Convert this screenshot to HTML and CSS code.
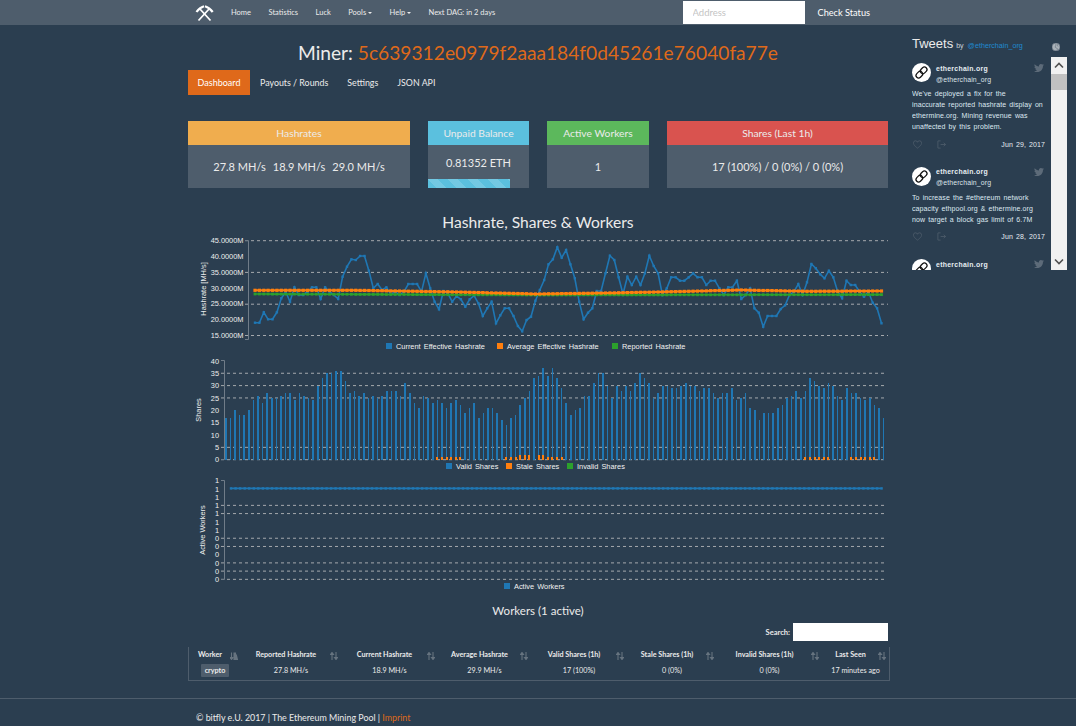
FILE: index.html
```html
<!DOCTYPE html>
<html lang="en">
<head>
<meta charset="utf-8">
<title>Miner Dashboard</title>
<link rel="stylesheet" href="styles.css">
</head>
<body>
<header class="topbar">
  <a class="logo" href="#" aria-label="Ethermine">
    <svg viewBox="0 0 20 18" width="20" height="18"><path class="logo-handle" d="M3.5 16.5 L14.5 4.5 M15.5 16.5 L4.5 4.5"/><path class="logo-head" d="M1.5 8 Q4.5 3.5 9 2.2 M17.7 8 Q14.5 3.5 10 2.2"/></svg>
  </a>
  <nav class="topnav">
    <a href="#">Home</a>
    <a href="#">Statistics</a>
    <a href="#">Luck</a>
    <a href="#">Pools <i class="caret"></i></a>
    <a href="#">Help <i class="caret"></i></a>
    <a href="#">Next DAG: in 2 days</a>
  </nav>
  <form class="search">
    <input class="address" type="text" placeholder="Address">
    <a class="check" href="#">Check Status</a>
  </form>
</header>

<div class="layout">
  <main class="content">
    <h1 class="miner">Miner: <span class="hash">5c639312e0979f2aaa184f0d45261e76040fa77e</span></h1>
    <ul class="tabs">
      <li class="tab active">Dashboard</li>
      <li class="tab">Payouts / Rounds</li>
      <li class="tab">Settings</li>
      <li class="tab">JSON API</li>
    </ul>
    <div class="cards">
      <section class="card"><h2 class="card-head warning">Hashrates</h2><div class="card-body wide-gap"><span>27.8 MH/s</span><span>18.9 MH/s</span><span>29.0 MH/s</span></div></section>
      <section class="card"><h2 class="card-head info">Unpaid Balance</h2><div class="card-body short">0.81352 ETH</div><div class="progress"><div class="progress-bar"></div></div></section>
      <section class="card"><h2 class="card-head success">Active Workers</h2><div class="card-body">1</div></section>
      <section class="card"><h2 class="card-head danger">Shares (Last 1h)</h2><div class="card-body">17 (100%) / 0 (0%) / 0 (0%)</div></section>
    </div>
    <h2 class="charts-title">Hashrate, Shares &amp; Workers</h2>
    <div id="chart-hash" class="chart chart-a"></div>
    <div id="chart-shares" class="chart chart-b"></div>
    <div id="chart-workers" class="chart chart-b"></div>
    <h2 class="workers-title">Workers (1 active)</h2>
    <div class="table-search"><label class="search-label" for="worker-search">Search:</label><input id="worker-search" class="search-box" type="text"></div>
    <table class="workers">
      <thead>
        <tr>
          <th class="c1">Worker<svg class="sort" viewBox="0 0 8 8"><path d="M1.5 0.5V7M0 5.5L1.5 7.5L3 5.5Z"/><path d="M4 1h1.5v1H4zM4 3h2.5v1H4zM4 5h3v1H4zM4 7h4v1H4z"/></svg></th>
          <th class="c2">Reported Hashrate<svg class="sort" viewBox="0 0 8 8"><path d="M2 1V8M0.5 2.5L2 .5L3.5 2.5ZM6 0V7M4.5 5.5L6 7.5L7.5 5.5Z"/></svg></th>
          <th class="c3">Current Hashrate<svg class="sort" viewBox="0 0 8 8"><path d="M2 1V8M0.5 2.5L2 .5L3.5 2.5ZM6 0V7M4.5 5.5L6 7.5L7.5 5.5Z"/></svg></th>
          <th class="c4">Average Hashrate<svg class="sort" viewBox="0 0 8 8"><path d="M2 1V8M0.5 2.5L2 .5L3.5 2.5ZM6 0V7M4.5 5.5L6 7.5L7.5 5.5Z"/></svg></th>
          <th class="c5">Valid Shares (1h)<svg class="sort" viewBox="0 0 8 8"><path d="M2 1V8M0.5 2.5L2 .5L3.5 2.5ZM6 0V7M4.5 5.5L6 7.5L7.5 5.5Z"/></svg></th>
          <th class="c6">Stale Shares (1h)<svg class="sort" viewBox="0 0 8 8"><path d="M2 1V8M0.5 2.5L2 .5L3.5 2.5ZM6 0V7M4.5 5.5L6 7.5L7.5 5.5Z"/></svg></th>
          <th class="c7">Invalid Shares (1h)<svg class="sort" viewBox="0 0 8 8"><path d="M2 1V8M0.5 2.5L2 .5L3.5 2.5ZM6 0V7M4.5 5.5L6 7.5L7.5 5.5Z"/></svg></th>
          <th class="c8">Last Seen<svg class="sort" viewBox="0 0 8 8"><path d="M2 1V8M0.5 2.5L2 .5L3.5 2.5ZM6 0V7M4.5 5.5L6 7.5L7.5 5.5Z"/></svg></th>
        </tr>
      </thead>
      <tbody>
        <tr>
          <td><span class="tag">crypto</span></td>
          <td>27.8 MH/s</td><td>18.9 MH/s</td><td>29.9 MH/s</td><td>17 (100%)</td><td>0 (0%)</td><td>0 (0%)</td><td>17 minutes ago</td>
        </tr>
      </tbody>
    </table>
  </main>

  <aside class="tweets">
    <div class="tweets-head">
      <span class="tweets-title">Tweets</span><span class="tweets-by">by</span><a class="tweets-handle" href="#">@etherchain_org</a>
      <svg class="globe" viewBox="0 0 8 8"><circle cx="4" cy="4" r="4"/><path d="M3 .5Q5 2 3.5 3T5 5.5T3.5 7.5M6 1Q5 2 6 3.5"/></svg>
    </div>
    <div class="tweets-frame">
      <div class="tweet-list">
        <article class="tweet">
          <div class="tweet-top">
            <span class="avatar"><svg viewBox="0 0 20 20"><g transform="rotate(-45 10 10)"><rect x="3" y="7.3" width="7.6" height="5.4" rx="2.7"/><rect x="9.4" y="7.3" width="7.6" height="5.4" rx="2.7"/></g></svg></span>
            <div class="who"><b class="name">etherchain.org</b><span class="handle">@etherchain_org</span></div>
            <svg class="bird" viewBox="0 0 24 24"><path d="M23.953 4.57a10 10 0 01-2.825.775 4.958 4.958 0 002.163-2.723c-.951.555-2.005.959-3.127 1.184a4.92 4.92 0 00-8.384 4.482C7.69 8.095 4.067 6.13 1.64 3.162a4.822 4.822 0 00-.666 2.475c0 1.71.87 3.213 2.188 4.096a4.904 4.904 0 01-2.228-.616v.06a4.923 4.923 0 003.946 4.827 4.996 4.996 0 01-2.212.085 4.936 4.936 0 004.604 3.417 9.867 9.867 0 01-6.102 2.105c-.39 0-.779-.023-1.17-.067a13.995 13.995 0 007.557 2.209c9.053 0 13.998-7.496 13.998-13.985 0-.21 0-.42-.015-.63A9.935 9.935 0 0024 4.59z"/></svg>
          </div>
          <p class="tweet-text">We've deployed a fix for the<br>inaccurate reported hashrate display on<br>ethermine.org. Mining revenue was<br>unaffected by this problem.</p>
          <div class="tweet-foot">
            <svg class="act heart" viewBox="0 0 10 10"><path d="M5 9C1 6 .5 4.5 .5 3.2A2.3 2.3 0 015 2.5 2.3 2.3 0 019.5 3.2C9.5 4.5 9 6 5 9Z"/></svg>
            <svg class="act share" viewBox="0 0 10 10"><path d="M4 1H1V9H4M4 5H9.5M7.5 3L9.5 5L7.5 7"/></svg>
            <time class="date">Jun 29, 2017</time>
          </div>
        </article>
        <article class="tweet">
          <div class="tweet-top">
            <span class="avatar"><svg viewBox="0 0 20 20"><g transform="rotate(-45 10 10)"><rect x="3" y="7.3" width="7.6" height="5.4" rx="2.7"/><rect x="9.4" y="7.3" width="7.6" height="5.4" rx="2.7"/></g></svg></span>
            <div class="who"><b class="name">etherchain.org</b><span class="handle">@etherchain_org</span></div>
            <svg class="bird" viewBox="0 0 24 24"><path d="M23.953 4.57a10 10 0 01-2.825.775 4.958 4.958 0 002.163-2.723c-.951.555-2.005.959-3.127 1.184a4.92 4.92 0 00-8.384 4.482C7.69 8.095 4.067 6.13 1.64 3.162a4.822 4.822 0 00-.666 2.475c0 1.71.87 3.213 2.188 4.096a4.904 4.904 0 01-2.228-.616v.06a4.923 4.923 0 003.946 4.827 4.996 4.996 0 01-2.212.085 4.936 4.936 0 004.604 3.417 9.867 9.867 0 01-6.102 2.105c-.39 0-.779-.023-1.17-.067a13.995 13.995 0 007.557 2.209c9.053 0 13.998-7.496 13.998-13.985 0-.21 0-.42-.015-.63A9.935 9.935 0 0024 4.59z"/></svg>
          </div>
          <p class="tweet-text">To increase the #ethereum network<br>capacity ethpool.org &amp; ethermine.org<br>now target a block gas limit of 6.7M</p>
          <div class="tweet-foot">
            <svg class="act heart" viewBox="0 0 10 10"><path d="M5 9C1 6 .5 4.5 .5 3.2A2.3 2.3 0 015 2.5 2.3 2.3 0 019.5 3.2C9.5 4.5 9 6 5 9Z"/></svg>
            <svg class="act share" viewBox="0 0 10 10"><path d="M4 1H1V9H4M4 5H9.5M7.5 3L9.5 5L7.5 7"/></svg>
            <time class="date">Jun 28, 2017</time>
          </div>
        </article>
        <article class="tweet">
          <div class="tweet-top">
            <span class="avatar"><svg viewBox="0 0 20 20"><g transform="rotate(-45 10 10)"><rect x="3" y="7.3" width="7.6" height="5.4" rx="2.7"/><rect x="9.4" y="7.3" width="7.6" height="5.4" rx="2.7"/></g></svg></span>
            <div class="who"><b class="name">etherchain.org</b></div>
            <svg class="bird" viewBox="0 0 24 24"><path d="M23.953 4.57a10 10 0 01-2.825.775 4.958 4.958 0 002.163-2.723c-.951.555-2.005.959-3.127 1.184a4.92 4.92 0 00-8.384 4.482C7.69 8.095 4.067 6.13 1.64 3.162a4.822 4.822 0 00-.666 2.475c0 1.71.87 3.213 2.188 4.096a4.904 4.904 0 01-2.228-.616v.06a4.923 4.923 0 003.946 4.827 4.996 4.996 0 01-2.212.085 4.936 4.936 0 004.604 3.417 9.867 9.867 0 01-6.102 2.105c-.39 0-.779-.023-1.17-.067a13.995 13.995 0 007.557 2.209c9.053 0 13.998-7.496 13.998-13.985 0-.21 0-.42-.015-.63A9.935 9.935 0 0024 4.59z"/></svg>
          </div>
        </article>
      </div>
      <div class="scrollbar">
        <svg class="arrow" viewBox="0 0 16 16"><path d="M4 10L8 6L12 10"/></svg>
        <div class="thumb"></div>
        <div class="track"></div>
        <svg class="arrow" viewBox="0 0 16 16"><path d="M4 6L8 10L12 6"/></svg>
      </div>
    </div>
  </aside>
</div>

<footer class="footer">© bitfly e.U. 2017 | The Ethereum Mining Pool | <a class="imprint" href="#">Imprint</a></footer>
<script src="charts.js"></script>
</body>
</html>
```
FILE: styles.css
```css
* { box-sizing: border-box; }
html, body { margin: 0; padding: 0; }
body {
  background: #2b3e50;
  color: #ebebeb;
  font-family: Lato, "Open Sans", sans-serif;
  font-size: 10px;
  overflow: hidden;
  height: 726px;
}
a { color: inherit; text-decoration: none; }

.topbar {
  height: 25px;
  background: #4e5d6c;
  display: flex;
  align-items: center;
  padding-left: 195px;
}
.logo { display: flex; width: 36px; }
.logo-handle { stroke: #fff; stroke-width: 1.8; fill: none; }
.logo-head { stroke: #fff; stroke-width: 2.2; fill: none; }
.topnav { display: flex; gap: 17.5px; font-size: 7.5px; }
.caret {
  display: inline-block;
  width: 0; height: 0;
  border-left: 2px solid transparent;
  border-right: 2px solid transparent;
  border-top: 2px solid #ebebeb;
  vertical-align: middle;
}
.search { margin-left: auto; display: flex; align-items: center; padding-right: 206px; }
.address {
  width: 122px; height: 23px;
  border: 0; padding: 0 10px; border-radius: 0;
  font: 9.5px Lato, sans-serif;
  background: #fff;
}
.address::placeholder { color: #c4c4c4; }
.check { margin-left: 13px; font-size: 9.2px; color: #fff; }

.layout { display: grid; grid-template-columns: 188px 700px 188px; }
.content { grid-column: 2; }

.miner {
  margin: 13px 0 2px;
  height: 30px;
  line-height: 30px;
  font-size: 19.2px;
  font-weight: 400;
  text-align: center;
  color: #ebebeb;
}
.hash { color: #df691a; }

.tabs { list-style: none; margin: 0 0 26px; padding: 0; display: flex; height: 25px; font-size: 8.85px; }
.tab { padding: 0 9.5px; line-height: 25px; color: #ebebeb; }
.tab.active { background: #df691a; color: #fff; width: 62px; padding: 0; margin-right: .5px; text-align: center; font-size: 9px; }

.cards { display: grid; grid-template-columns: 222px 101px 102px 221px; gap: 18px; height: 67px; }
.card { display: flex; flex-direction: column; background: #4e5d6c; }
.card-head {
  margin: 0; height: 24px; line-height: 24px;
  font-size: 10.3px; font-weight: 400;
  text-align: center; color: #ebebeb;
}
.warning { background: #f0ad4e; }
.info { background: #5bc0de; }
.success { background: #5cb85c; }
.danger { background: #d9534f; }
.card-body {
  flex: 1;
  display: flex; align-items: center; justify-content: center;
  font-size: 11px;
  color: #ebebeb;
}
.wide-gap { gap: 7px; }
.card-body.short { flex: 0 0 34px; }
.progress { height: 9px; background: #4e5d6c; }
.progress-bar {
  width: 81%; height: 100%;
  background-color: #5bc0de;
  background-image: linear-gradient(45deg, rgba(255,255,255,.15) 25%, transparent 25%, transparent 50%, rgba(255,255,255,.15) 50%, rgba(255,255,255,.15) 75%, transparent 75%, transparent);
  background-size: 20px 20px;
}

.charts-title {
  margin: 24px 0 3px;
  height: 20px; line-height: 20px;
  font-size: 15.6px; font-weight: 400;
  text-align: center;
}
.chart svg { display: block; }
.chart-a { height: 117px; }
.chart-b { height: 120px; }
.axis-line { stroke: #707c88; stroke-width: 1; fill: none; }
.grid-line { stroke: #a5a9ad; stroke-width: 1; stroke-dasharray: 3 3; }
.axis-text { font: 7.4px "Liberation Sans", Arial, sans-serif; fill: #eee; }
.legend-text { font: 7.4px "Liberation Sans", Arial, sans-serif; fill: #f2f2f2; word-spacing: 1px; }
.line { fill: none; stroke-width: 1.6; }
.line.orange { stroke-width: 2; }
.blue { stroke: #1f77b4; fill: #1f77b4; }
.orange { stroke: #ff7f0e; fill: #ff7f0e; }
.green { stroke: #2ca02c; fill: #2ca02c; }
.line.blue, .line.orange, .line.green { fill: none; }
.bar { stroke: none; }
.bar.blue { fill: #1f77b4; }
.bar.orange { fill: #ff7f0e; }
.crisp { shape-rendering: crispEdges; }

.workers-title {
  margin: 9px 0 0;
  height: 20px; line-height: 20px;
  font-size: 11.5px; font-weight: 400;
  text-align: center;
}
.table-search { display: flex; justify-content: flex-end; align-items: center; gap: 3px; height: 18px; margin-top: 2px; }
.search-label { font-size: 7.5px; font-weight: 700; }
.search-box { width: 95px; height: 18px; border: 0; background: #fff; padding: 0; }
.workers {
  width: 700px;
  margin-top: 6px;
  table-layout: fixed;
  border-collapse: separate;
  border-spacing: 0;
  border-left: 1px solid #4e5d6c;
  border-right: 1px solid #4e5d6c;
  border-bottom: 1px solid #4e5d6c;
  font-size: 7.2px;
}
.workers th {
  position: relative;
  height: 15px;
  padding: 0 10px 0 0;
  font-weight: 700;
  text-align: center;
  white-space: nowrap;
  color: #ebebeb;
}
.workers td { height: 18px; padding: 0 0 2px; text-align: center; white-space: nowrap; color: #ebebeb; }
.c1 { width: 52px; }
.c2 { width: 100px; }
.c3 { width: 97px; }
.c4 { width: 93px; }
.c5 { width: 96px; }
.c6 { width: 90px; }
.c7 { width: 105px; }
.c8 { width: 67px; }
.sort { position: absolute; right: 3px; top: 5px; width: 8px; height: 8px; fill: #66737f; stroke: #66737f; stroke-width: 1.1; }
.tag { display: inline-block; background: #4e5d6c; padding: 0 4px; line-height: 13px; font-weight: 700; font-size: 7.2px; border-radius: 1px; }

.tweets { padding: 11px 9px 0 24px; font-family: "Liberation Sans", Arial, sans-serif; }
.tweets-head { display: flex; align-items: baseline; height: 21px; }
.tweets-title { font-size: 13px; color: #ebebeb; }
.tweets-by { font-size: 7px; margin: 0 4px 0 3px; color: #cfd6dc; }
.tweets-handle { font-size: 7.2px; color: #1f8bd0; }
.globe { width: 8px; height: 8px; margin-left: auto; margin-right: 7px; align-self: center; fill: #aab2b9; stroke: #5e6b78; stroke-width: .6; }
.tweets-frame { display: flex; height: 213px; overflow: hidden; }
.tweet-list { flex: 1; overflow: hidden; padding-right: 6px; }
.tweet { padding: 6px 0 9.5px; }
.tweet-top { display: flex; gap: 5px; height: 19px; }
.avatar { width: 19px; height: 19px; border-radius: 50%; background: #fff; display: block; flex: none; }
.avatar svg { display: block; fill: none; stroke: #111; stroke-width: 1.3; }
.who { display: flex; flex-direction: column; gap: 3.5px; font-size: 6.9px; margin-top: 1.5px; color: #e6edf2; line-height: 7.5px; }
.name { font-weight: 700; word-spacing: .5px; letter-spacing: .3px; }
.handle { letter-spacing: .15px; color: #dde4ea; }
.bird { width: 10px; height: 10px; margin-left: auto; fill: #5d6b79; margin-right: 1px; }
.tweet-text { margin: 6px 0 0; font-size: 7px; line-height: 11px; color: #dde8f0; white-space: nowrap; word-spacing: 1px; letter-spacing: .1px; }
.tweet-foot { display: flex; align-items: center; height: 14px; margin-top: 5px; padding-left: 1px; }
.act { width: 9px; height: 9px; fill: none; stroke: #53616f; stroke-width: .8; }
.share { margin-left: 15px; }
.date { margin-left: auto; font-size: 7px; color: #e6edf2; letter-spacing: .1px; word-spacing: 1px; }
.scrollbar { flex: 0 0 16px; display: flex; flex-direction: column; background: #f1f1f1; }
.arrow { width: 16px; height: 17px; flex: none; fill: none; stroke: #505050; stroke-width: 1.6; }
.thumb { height: 16px; background: #c1c1c1; }
.track { flex: 1; }

.footer {
  margin-top: 17px;
  border-top: 1px solid #4e5d6c;
  padding: 13px 0 0 196px;
  font-size: 8.9px;
  color: #ebebeb;
}
.imprint { color: #df691a; }
```
FILE: charts.js
```js
(function () {
  // Blue hashrate series, read as page coordinates.
  var hashY = [278,278,247,268,268,247,205,185,215,172,195,195,185,172,172,207,172,185,195,207,140,110,88,90,78,78,122,175,162,180,172,193,185,195,185,162,162,162,185,130,175,215,238,183,190,215,198,208,230,208,197,220,258,235,215,280,256,235,235,258,288,304,270,260,212,180,
    150,103,88,52,83,60,103,145,215,268,248,235,183,183,130,77,90,142,192,140,165,140,165,130,77,108,130,195,175,142,142,152,152,142,130,142,142,165,152,152,175,195,172,172,152,207,195,175,235,248,290,258,258,258,237,226,195,185,162,195,157,102,115,133,145,122,142,185,205,152,165,165,185,200,185,218,235,280];
  var shares = [17,17,20,18,18,20,24,26,23,27,25,25,26,27,27,24,27,26,25,24,30,33,35,35,36,36,32,27,28,26,27,25,26,25,26,28,28,28,26,31,27,23,21,26,25,23,24,23,21,23,24,22,19,21,23,17,19,21,21,19,16,14,17,18,22,25,28,33,34,
    37,34,37,33,29,23,18,20,21,26,26,31,35,35,30,25,30,28,30,28,31,35,33,31,25,27,30,30,29,29,30,31,30,30,28,29,29,27,25,27,27,29,24,25,27,21,20,16,19,19,19,21,22,25,26,28,25,28,33,32,30,29,31,30,26,24,29,27,27,25,24,25,22,21,17];
  var stale = {};
  [[46,51,1],[61,63,1],[64,66,2],[68,69,2],[70,73,1],[126,131,1],[136,141,1]].forEach(function (r) {
    for (var i = r[0]; i <= r[1]; i++) stale[i] = r[2];
  });

  function lerp(pts, x) {
    for (var i = 1; i < pts.length; i++) {
      if (x <= pts[i][0]) {
        var a = pts[i - 1], b = pts[i];
        return a[1] + (b[1] - a[1]) * (x - a[0]) / (b[0] - a[0]);
      }
    }
    return pts[pts.length - 1][1];
  }
  function series(pts, cls, r) {
    var s = '<polyline class="line ' + cls + '" points="' + pts.map(function (p) { return p[0].toFixed(1) + ',' + p[1].toFixed(1); }).join(' ') + '"/>';
    pts.forEach(function (p) {
      s += '<rect class="bar ' + cls + '" x="' + (p[0] - r).toFixed(1) + '" y="' + (p[1] - r).toFixed(1) + '" width="' + 2 * r + '" height="' + 2 * r + '"/>';
    });
    return s;
  }
  function grid(x, y, x2) { return '<line class="grid-line" x1="' + x + '" x2="' + x2 + '" y1="' + y + '" y2="' + y + '"/>'; }
  function label(x, y, t) { return '<text class="axis-text" text-anchor="end" x="' + x + '" y="' + (y + 2.7) + '">' + t + '</text>'; }
  function ylabel(x, y, t) { return '<text class="axis-text" text-anchor="middle" transform="translate(' + x + ' ' + y + ') rotate(-90)">' + t + '</text>'; }
  function legend(x, y, cls, t) { return '<rect class="bar ' + cls + '" x="' + x + '" y="' + (y - 3) + '" width="6" height="6"/><text class="legend-text" x="' + (x + 10) + '" y="' + (y + 2.6) + '">' + t + '</text>'; }
  function svg(id, top, h, body) {
    document.getElementById(id).innerHTML = '<svg width="700" height="' + h + '" viewBox="188 ' + top + ' 700 ' + h + '">' + body + '</svg>';
  }

  // Hashrate chart
  var b = '';
  [240.7, 272.4, 304.2, 335.5].forEach(function (y) { b += grid(245, y, 888); });
  b += '<path class="axis-line" d="M245 240.5H248.5V339.5H245"/>';
  ['45.0000M','40.0000M','35.0000M','30.0000M','25.0000M','20.0000M','15.0000M'].forEach(function (t, i) {
    b += label(243.5, 240.7 + i * 15.75, t);
  });
  b += ylabel(206, 289, 'Hashrate [MH/s]');
  var step = (881.5 - 255) / (hashY.length - 1);
  var blue = [], orange = [], green = [];
  var oc = [[255,290.3],[357,290.3],[457,292],[537,294],[607,293],[673,291.7],[740,290],[807,291.3],[882,291]];
  var gc = [[255,294],[540,295],[882,294.6]];
  hashY.forEach(function (z, i) {
    var x = 255 + i * step;
    var y = 230 + z / 3;
    blue.push([x, y]);
    orange.push([x, lerp(oc, x)]);
    green.push([x, lerp(gc, x)]);
  });
  b += series(blue, 'blue', 1.2) + series(green, 'green', 1.4) + series(orange, 'orange', 1.6);
  b += legend(386, 346, 'blue', 'Current Effective Hashrate');
  b += legend(497, 346, 'orange', 'Average Effective Hashrate');
  b += legend(612, 346, 'green', 'Reported Hashrate');
  svg('chart-hash', 235, 117, b);

  // Shares chart
  b = '';
  [35, 30, 25, 5, 0].forEach(function (v) { b += grid(221, 459.7 - v * 2.47, 887); });
  b += '<path class="axis-line" d="M221 360.5H224.5V459.5H221"/>';
  for (var v = 40; v >= 0; v -= 5) b += label(219, 459.7 - v * 2.47, String(v));
  b += ylabel(201, 410, 'Shares');
  shares.forEach(function (s, i) {
    var x = 225.7 + i * 4.6;
    b += '<rect class="bar blue crisp" x="' + (x - 0.8).toFixed(1) + '" y="' + (459.7 - s * 2.47).toFixed(1) + '" width="1.6" height="' + (s * 2.47).toFixed(1) + '"/>';
    if (stale[i]) b += '<rect class="bar orange crisp" x="' + (x - 1).toFixed(1) + '" y="' + (459.7 - stale[i] * 2.47).toFixed(1) + '" width="2" height="' + (stale[i] * 2.47).toFixed(1) + '"/>';
  });
  b += legend(446, 466, 'blue', 'Valid Shares');
  b += legend(506, 466, 'orange', 'Stale Shares');
  b += legend(567, 466, 'green', 'Invalid Shares');
  svg('chart-shares', 352, 120, b);

  // Workers chart
  b = '';
  var ty = function (i) { return 480.7 + i * 8.22; };
  [3, 4, 7, 8, 10, 11, 12].forEach(function (i) { b += grid(221, ty(i), 887); });
  b += '<path class="axis-line" d="M221 480.5H224.5V579.5H221"/>';
  ['1','1','1','1','1','1','1','0','0','0','0','0','0'].forEach(function (t, i) { b += label(219, ty(i), t); });
  b += ylabel(205, 530, 'Active Workers');
  var w = [];
  for (var i = 0; i < 144; i++) w.push([231 + i * 4.55, 488.4]);
  b += series(w, 'blue', 1.2);
  b += legend(504, 586, 'blue', 'Active Workers');
  svg('chart-workers', 472, 120, b);
})();
```
